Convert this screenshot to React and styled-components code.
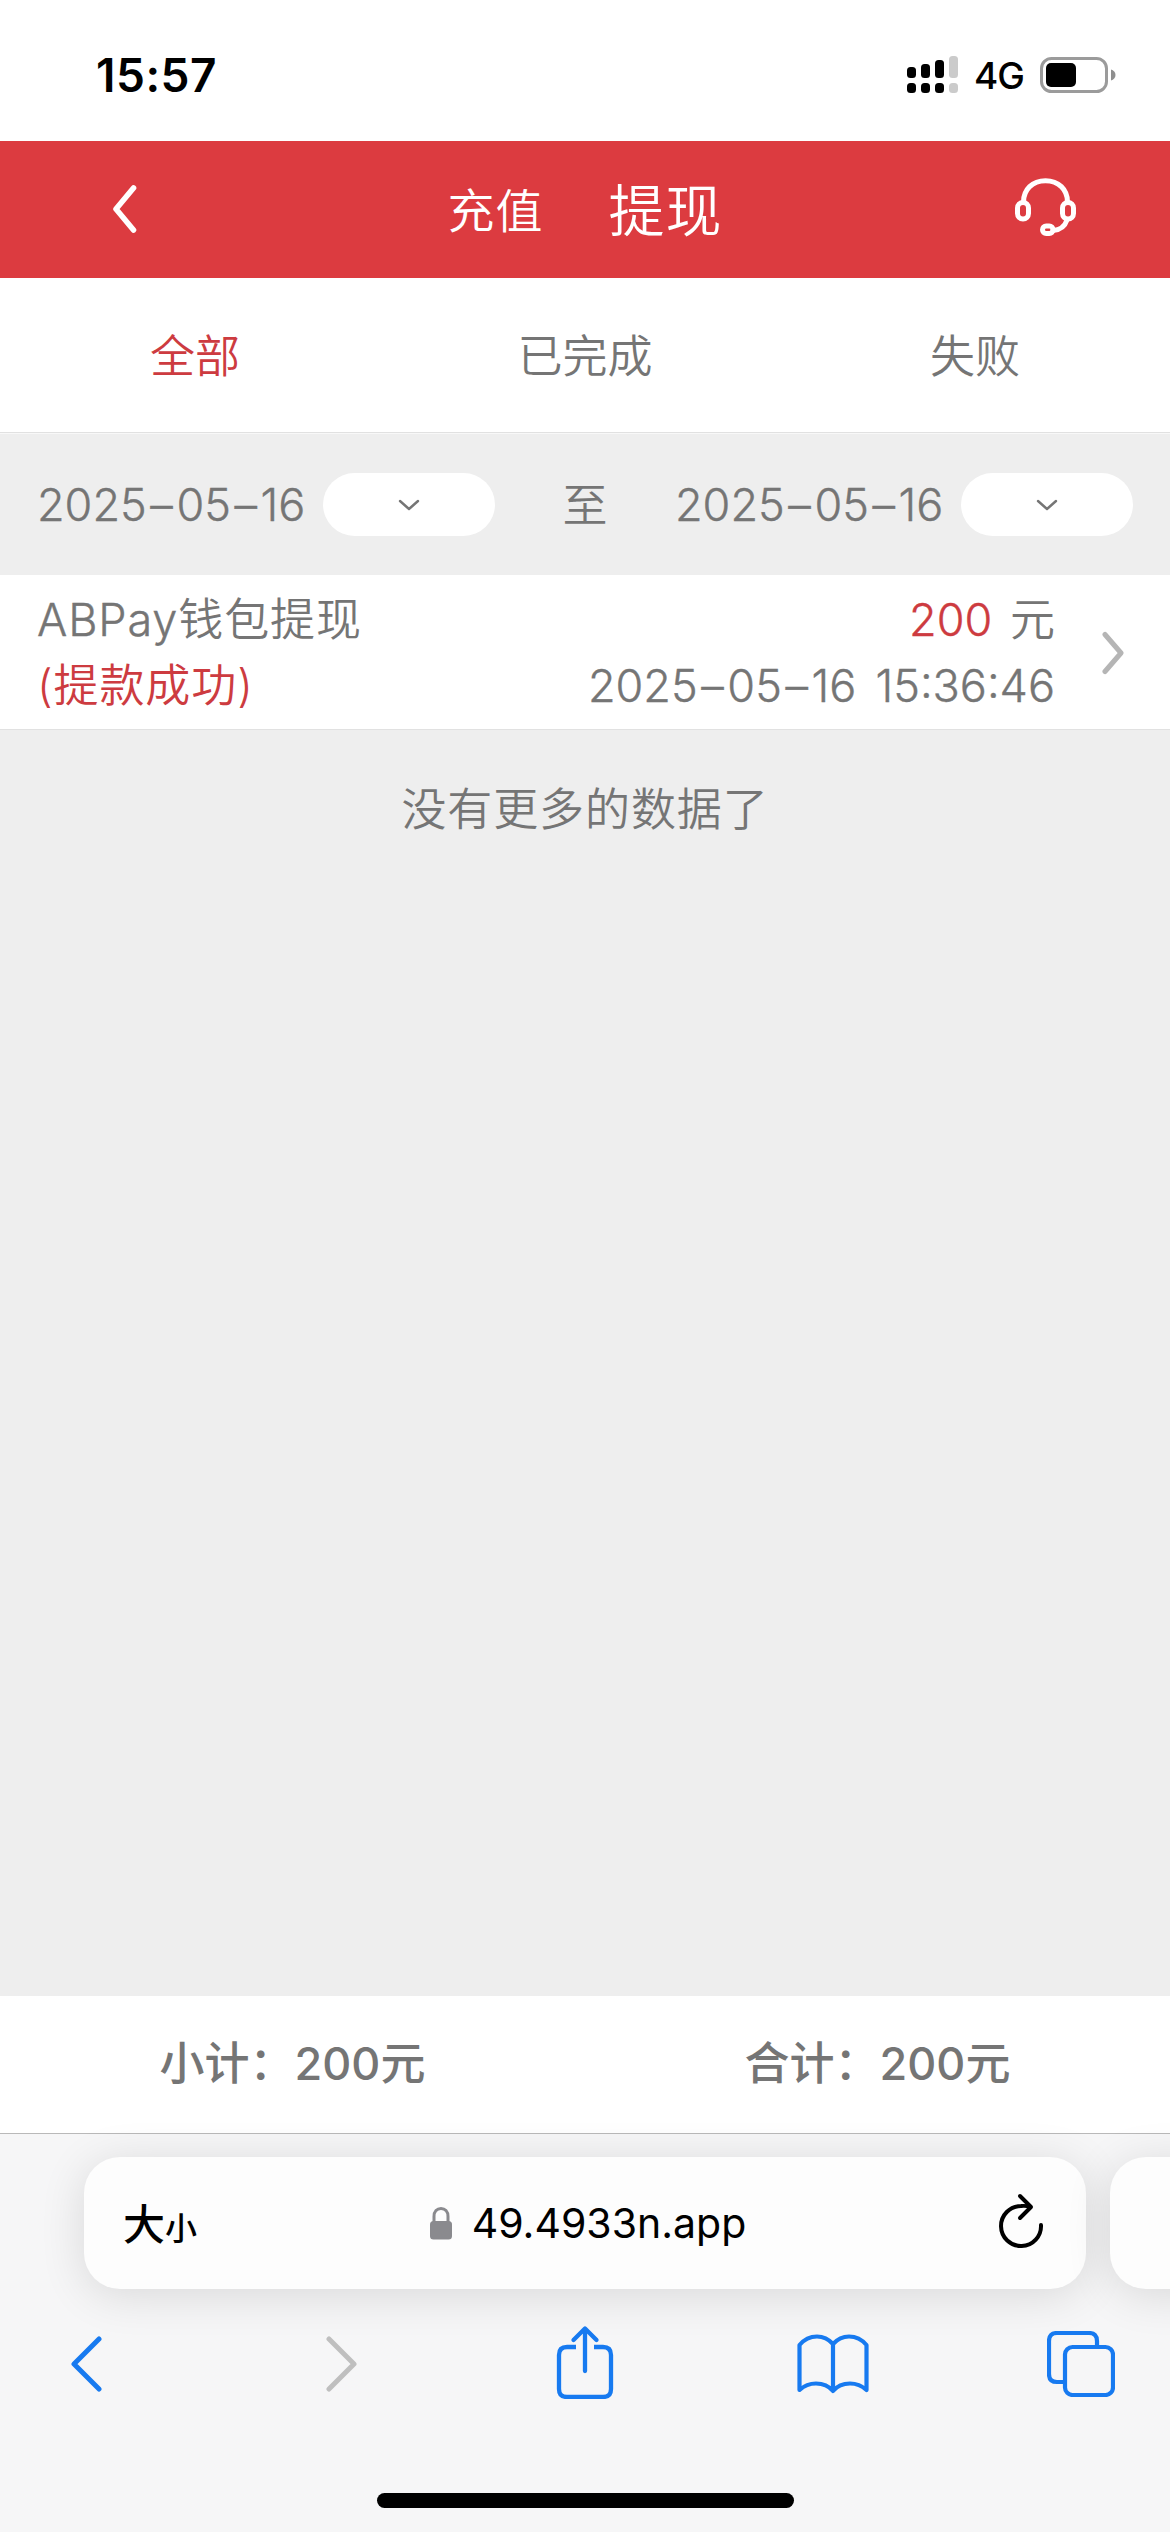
import React, { useState } from 'react';
import styled, { createGlobalStyle } from 'styled-components';

const palette = {
  red: '#dc3b40',
  redText: '#cd3b40',
  gray: '#757575',
  light: '#eeeeee',
  border: '#e1e1e1',
  blue: '#177af0',
};

const GlobalStyle = createGlobalStyle`
  * {
    box-sizing: border-box;
  }
  body {
    margin: 0;
    background-color: ${palette.light};
    font-family: Inter, 'Noto Sans CJK SC', sans-serif;
  }
`;

const Phone = styled.div`
  display: flex;
  flex-direction: column;
  width: 1170px;
  height: 2532px;
  overflow: hidden;
  color: ${palette.gray};
  font-size: 45px;
  font-weight: 350;
`;

const StatusBar = styled.div`
  display: flex;
  align-items: center;
  justify-content: space-between;
  height: 141px;
  padding: 8px 54px 0 96px;
  background-color: white;
  color: black;
`;
const Clock = styled.div`
  font-size: 46px;
  font-weight: 600;
  letter-spacing: 0.5px;
`;
const StatusIcons = styled.div`
  display: flex;
  align-items: center;
`;
const Network = styled.span`
  margin: 2px 16px 0 16px;
  font-size: 37px;
  font-weight: 500;
  letter-spacing: -1px;
`;

const Header = styled.header`
  display: grid;
  grid-template-columns: 250px 1fr 250px;
  align-items: center;
  height: 137px;
  background-color: ${palette.red};
  color: white;
`;
const HeaderButton = styled.div`
  display: flex;
  justify-content: ${(props) => (props.$right ? 'flex-end' : 'flex-start')};
  padding: ${(props) => (props.$right ? '0 94px 5px 0' : '0 0 2px 112px')};
`;
const HeaderTabs = styled.div`
  display: flex;
  align-items: center;
  justify-content: center;
  gap: 65px;
`;
const HeaderTab = styled.div`
  font-size: ${(props) => (props.$active ? '56px' : '47px')};
  line-height: 80px;
  letter-spacing: 1px;
  margin-top: 2px;
`;

const Filters = styled.nav`
  display: grid;
  grid-template-columns: repeat(3, 1fr);
  align-items: center;
  height: 155px;
  padding-bottom: 3px;
  background-color: white;
  border-bottom: 1px solid ${palette.border};
`;
const Filter = styled.div`
  text-align: center;
  color: ${(props) => (props.$active ? palette.redText : palette.gray)};
`;

const DateRow = styled.div`
  display: flex;
  align-items: center;
  justify-content: space-between;
  height: 142px;
  padding: 0 37px;
  border-top: 1px solid #f8f8f8;
`;
const DateField = styled.div`
  display: flex;
  align-items: center;
  justify-content: space-between;
  width: 458px;
`;
const Latin = styled.span`
  font-weight: 300;
  white-space: nowrap;
  word-spacing: 6.5px;
  -webkit-text-stroke: 0.4px currentColor;
`;
const Dash = styled.span`
  margin: 0 3.6px;
`;
const To = styled.span`
  padding-bottom: 5px;
`;
const Pill = styled.div`
  display: flex;
  align-items: center;
  justify-content: center;
  width: 172px;
  height: 63px;
  border-radius: 32px;
  background-color: white;
`;

const Record = styled.div`
  display: flex;
  align-items: center;
  height: 155px;
  padding: 2px 45px 0 37px;
  background-color: white;
  border-bottom: 1px solid ${palette.border};
`;
const RecordColumn = styled.div`
  flex: ${(props) => (props.$right ? 'none' : 1)};
  text-align: ${(props) => (props.$right ? 'right' : 'left')};
  line-height: 66px;
  letter-spacing: ${(props) => (props.$right ? 0 : '0.9px')};
  word-spacing: 5px;
`;
const RecordArrow = styled.div`
  display: flex;
  margin-left: 46px;
`;
const Red = styled.span`
  color: ${palette.redText};
`;
const List = styled.main`
  flex: 1;
  background-color: ${palette.light};
`;
const Empty = styled.div`
  padding-top: 47px;
  text-align: center;
  line-height: 66px;
  letter-spacing: 0.9px;
`;

const Totals = styled.div`
  display: grid;
  grid-template-columns: 1fr 1fr;
  align-items: center;
  height: 137px;
  padding-bottom: 8px;
  background-color: white;
  font-weight: 500;
`;
const Total = styled.div`
  text-align: center;
`;

const Browser = styled.footer`
  height: 399px;
  padding-top: 23px;
  background-color: #f6f6f7;
  border-top: 1px solid #b9b9b9;
`;
const AddressRow = styled.div`
  display: flex;
  gap: 24px;
  padding-left: 84px;
`;
const Card = styled.div`
  flex: none;
  display: grid;
  grid-template-columns: 200px 1fr 200px;
  align-items: center;
  width: 1002px;
  height: 132px;
  border-radius: 36px;
  background-color: #fdfdfd;
  box-shadow: 0 6px 46px rgba(0, 0, 0, 0.12);
  color: black;
`;
const TextSize = styled.div`
  display: flex;
  align-items: baseline;
  padding: 0 0 3px 39px;
  font-size: 42px;
  font-weight: 500;
`;
const Small = styled.span`
  font-size: 32px;
`;
const Address = styled.div`
  display: flex;
  align-items: center;
  justify-content: center;
  gap: 20px;
  padding-left: 6px;
  font-size: 41px;
  font-weight: 400;
`;
const Reload = styled.div`
  display: flex;
  justify-content: flex-end;
  padding: 0 41px 4px 0;
`;
const Toolbar = styled.div`
  display: flex;
  align-items: center;
  justify-content: space-between;
  height: 150px;
  padding: 0 50px 0 46px;
`;
const ToolButton = styled.div`
  display: flex;
  justify-content: center;
  width: 80px;
  padding: ${(props) => props.$nudge || 0};
`;
const HomeBar = styled.div`
  width: 417px;
  height: 15px;
  margin: 54px auto 0;
  border-radius: 8px;
  background-color: black;
`;

const Stroked = styled.svg`
  display: block;
  flex: none;
  fill: none;
  stroke: ${(props) => props.$color || 'currentColor'};
  stroke-width: ${(props) => props.$weight || 5};
  stroke-linecap: round;
  stroke-linejoin: round;
`;

const Signal = () => (
  <svg width="51" height="38" viewBox="0 0 51 38">
    <rect x="0" y="11" width="9" height="11" rx="3.5" />
    <rect x="14" y="8" width="9" height="14" rx="3.5" />
    <rect x="28" y="4" width="9" height="18" rx="3.5" />
    <rect x="42" y="0" width="9" height="22" rx="3.5" fill="#cbcbcb" />
    <rect x="0" y="27" width="9" height="10" rx="3.5" />
    <rect x="14" y="27" width="9" height="10" rx="3.5" />
    <rect x="28" y="27" width="9" height="10" rx="3.5" />
    <rect x="42" y="27" width="9" height="10" rx="3.5" fill="#cbcbcb" />
  </svg>
);

const Battery = () => (
  <svg width="76" height="36" viewBox="0 0 76 36">
    <rect
      x="1.5"
      y="1.5"
      width="65"
      height="33"
      rx="10"
      fill="none"
      stroke="#9b9b9b"
      strokeWidth="3"
    />
    <rect x="6" y="6" width="30" height="24" rx="5" />
    <path d="M71 12.5c2.6.5 4.5 2.8 4.5 5.5s-1.9 5-4.5 5.5z" fill="#8f8f8f" />
  </svg>
);

const ChevronDown = () => (
  <Stroked width="22" height="12" viewBox="0 0 22 12" $weight={2.4}>
    <path d="M2 2l9 8 9-8" />
  </Stroked>
);

const Headset = () => (
  <Stroked width="61" height="58" viewBox="0 0 61 58" $weight={5}>
    <path d="M8.5 24C8.5 11.5 17.5 2.7 30.5 2.7S52.5 11.5 52.5 24" />
    <rect x="2.5" y="24.5" width="11" height="16.5" rx="5.5" />
    <rect x="47.5" y="24.5" width="11" height="16.5" rx="5.5" />
    <path d="M52 42c-2 6-6.5 10-14 10.5" />
    <rect x="27.5" y="48" width="10.5" height="7.5" rx="3.7" />
  </Stroked>
);

const Lock = () => (
  <svg width="22" height="33" viewBox="0 0 22 33">
    <path
      d="M4 16V9.5C4 4.5 7 1.5 11 1.5s7 3 7 8V16"
      fill="none"
      stroke="#8a8a8e"
      strokeWidth="3"
    />
    <rect x="0" y="14" width="22" height="18.5" rx="3.5" fill="#8a8a8e" />
  </svg>
);

const Day = () => (
  <>
    2025<Dash>–</Dash>05<Dash>–</Dash>16
  </>
);

const DatePicker = () => (
  <DateField>
    <Latin>
      <Day />
    </Latin>
    <Pill>
      <ChevronDown />
    </Pill>
  </DateField>
);

const filters = ['全部', '已完成', '失败'];

const App = () => {
  const [active, setActive] = useState('全部');

  return (
    <>
      <GlobalStyle />
      <Phone>
        <StatusBar>
          <Clock>15:57</Clock>
          <StatusIcons>
            <Signal />
            <Network>4G</Network>
            <Battery />
          </StatusIcons>
        </StatusBar>
        <Header>
          <HeaderButton>
            <Stroked width="26" height="48" viewBox="0 0 26 48" $weight={5.6}>
              <path d="M21.5 3L4 24l17.5 21" />
            </Stroked>
          </HeaderButton>
          <HeaderTabs>
            <HeaderTab>充值</HeaderTab>
            <HeaderTab $active>提现</HeaderTab>
          </HeaderTabs>
          <HeaderButton $right>
            <Headset />
          </HeaderButton>
        </Header>
        <Filters>
          {filters.map((name) => (
            <Filter
              key={name}
              $active={name === active}
              onClick={() => setActive(name)}
            >
              {name}
            </Filter>
          ))}
        </Filters>
        <DateRow>
          <DatePicker />
          <To>至</To>
          <DatePicker />
        </DateRow>
        <Record>
          <RecordColumn>
            <div>
              <Latin>ABPay</Latin>钱包提现
            </div>
            <Red>(提款成功)</Red>
          </RecordColumn>
          <RecordColumn $right>
            <div>
              <Red>
                <Latin>200</Latin>
              </Red>{' '}
              元
            </div>
            <Latin>
              <Day /> 15:36:46
            </Latin>
          </RecordColumn>
          <RecordArrow>
            <Stroked width="24" height="44" viewBox="0 0 24 44" $color="#b5b5b5">
              <path d="M4 3.5L20 22 4 40.5" />
            </Stroked>
          </RecordArrow>
        </Record>
        <List>
          <Empty>没有更多的数据了</Empty>
        </List>
        <Totals>
          <Total>小计：200元</Total>
          <Total>合计：200元</Total>
        </Totals>
        <Browser>
          <AddressRow>
            <Card>
              <TextSize>
                大<Small>小</Small>
              </TextSize>
              <Address>
                <Lock />
                49.4933n.app
              </Address>
              <Reload>
                <Stroked width="48" height="56" viewBox="0 0 48 56" $weight={4}>
                  <path d="M44 32A20 20 0 1 1 24 13Q30 12.5 33 14" />
                  <path d="M23 3l11 11-11 11" />
                </Stroked>
              </Reload>
            </Card>
            <Card />
          </AddressRow>
          <Toolbar>
            <ToolButton>
              <Stroked width="34" height="56" viewBox="0 0 34 56" $color={palette.blue}>
                <path d="M30 3L5 28l25 25" />
              </Stroked>
            </ToolButton>
            <ToolButton $nudge="0 0 0 14px">
              <Stroked width="34" height="56" viewBox="0 0 34 56" $color="#bfbfbf">
                <path d="M4 3l25 25L4 53" />
              </Stroked>
            </ToolButton>
            <ToolButton $nudge="0 0 4px 4px">
              <Stroked width="58" height="74" viewBox="0 0 58 74" $color={palette.blue} $weight={4.3}>
                <path d="M20 22h-9q-8 0-8 8v34q0 8 8 8h36q8 0 8-8V30q0-8-8-8h-9" strokeLinecap="butt" />
                <path d="M29 46V4M17.5 15L29 3.5 40.5 15" />
              </Stroked>
            </ToolButton>
            <ToolButton $nudge="0 0 0 2px">
              <Stroked width="72" height="60" viewBox="0 0 72 60" $color={palette.blue} $weight={4.2}>
                <path d="M36 10C31 4.5 26 2.5 20 2.5S7.5 5 2.5 11v45C8 51 14 49.5 19 49.5S31 51 36 57C41 51 48 49.5 53 49.5S64 51 69.5 56V11C64.5 5 58 2.5 52 2.5S41 4.5 36 10zV57" />
              </Stroked>
            </ToolButton>
            <ToolButton $nudge="0 0 1px 1px">
              <Stroked width="68" height="66" viewBox="0 0 68 66" $color={palette.blue} $weight={4.2}>
                <path d="M50 16V10q0-8-8-8H10Q2 2 2 10v33q0 8 8 8h7" />
                <rect x="18" y="16" width="48" height="48" rx="7.5" />
              </Stroked>
            </ToolButton>
          </Toolbar>
          <HomeBar />
        </Browser>
      </Phone>
    </>
  );
};

export default App;
